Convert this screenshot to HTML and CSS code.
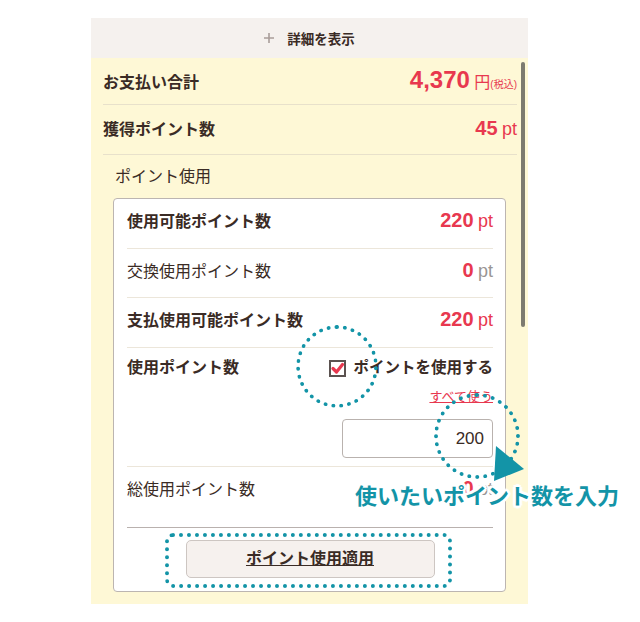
FILE: index.html
```html
<!DOCTYPE html>
<html lang="ja">
<head>
<meta charset="utf-8">
<title>ポイント使用</title>
<link rel="stylesheet" href="styles.css">
</head>
<body>
<div class="page">
  <div class="panel">
    <div class="detail-bar">
      <svg class="plus" width="10" height="10" viewBox="0 0 10 10"><path d="M5 0V10M0 5H10" stroke="#a99d99" stroke-width="1.6"/></svg>
      <span>詳細を表示</span>
    </div>
    <div class="summary">
      <div class="top-row r1">
        <span class="label bold">お支払い合計</span>
        <span class="value"><span class="big">4,370</span> <span class="yen">円</span><span class="tax">(税込)</span></span>
      </div>
      <div class="top-row r2">
        <span class="label bold">獲得ポイント数</span>
        <span class="value"><span class="num">45</span> <span class="pt">pt</span></span>
      </div>
      <div class="section-title">ポイント使用</div>
      <div class="card">
        <div class="crow c1">
          <span class="label bold">使用可能ポイント数</span>
          <span class="value"><span class="num">220</span> <span class="pt">pt</span></span>
        </div>
        <div class="crow c2">
          <span class="label">交換使用ポイント数</span>
          <span class="value"><span class="num">0</span> <span class="pt grey">pt</span></span>
        </div>
        <div class="crow c3">
          <span class="label bold">支払使用可能ポイント数</span>
          <span class="value"><span class="num">220</span> <span class="pt">pt</span></span>
        </div>
        <div class="crow c4">
          <span class="label bold">使用ポイント数</span>
          <div class="use-col">
            <label class="check-line">
              <svg class="checkbox" width="17" height="17" viewBox="0 0 17 17"><rect x="1" y="1" width="15" height="15" fill="#fff" stroke="#5b5250" stroke-width="2"/><path d="M4 8.5L7.5 12L13.5 4.5" fill="none" stroke="#e8384f" stroke-width="3.2" stroke-linecap="round" stroke-linejoin="round"/></svg>
              <span class="bold">ポイントを使用する</span>
            </label>
            <a class="use-all">すべて使う</a>
            <input class="pt-input" type="text" value="200">
          </div>
        </div>
        <div class="crow c5">
          <span class="label">総使用ポイント数</span>
          <span class="value"><span class="num">0</span> <span class="pt grey">pt</span></span>
        </div>
        <div class="btn-area">
          <div class="apply-btn">ポイント使用適用</div>
        </div>
      </div>
    </div>
    <div class="scrollbar"></div>
  </div>

  <div class="ann circ1"></div>
  <div class="ann circ2"></div>
  <div class="ann rect"></div>
  <svg class="arrow" width="40" height="40" viewBox="0 0 40 40"><polygon points="6,2 34,25 4,37" fill="#1394a7"/></svg>
  <div class="ann-text">使いたいポイント数を入力</div>
</div>
</body>
</html>
```

FILE: styles.css
```css
body {
  margin: 0;
  background: #fff;
  font-family: "Liberation Sans", "Noto Sans CJK JP", sans-serif;
  color: #3a2b25;
}

.page {
  position: relative;
  width: 640px;
  height: 622px;
}

.panel {
  position: relative;
  margin-left: 91px;
  padding-top: 18px;
  width: 437px;
}

.bold { font-weight: bold; }

.detail-bar {
  height: 40px;
  background: #f5f1ee;
  display: flex;
  align-items: center;
  justify-content: center;
  gap: 13px;
  font-size: 13.5px;
  font-weight: bold;
}

.summary {
  background: #fef8d6;
  padding: 0 11px 12px 12px;
}

.top-row,
.crow {
  display: flex;
  justify-content: space-between;
  align-items: baseline;
  line-height: 22px;
  font-size: 16px;
}

.top-row { border-bottom: 1px solid #e8e1cb; }

.r1 { padding-top: 11px; height: 35px; }
.r2 { padding-top: 12px; height: 37px; }

.value { color: #e8384f; white-space: nowrap; }
.big { font-size: 24px; font-weight: bold; }
.yen { font-size: 16px; }
.tax { font-size: 10px; }
.num { font-size: 20px; font-weight: bold; }
.pt { font-size: 18px; }
.pt.grey { color: #9a9593; }

.section-title {
  padding: 11px 0 10px 12px;
  line-height: 22px;
  font-size: 16px;
}

.card {
  margin: 0 11px 0 10px;
  background: #fff;
  border: 1px solid #bcb5b1;
  border-radius: 4px;
  padding: 0 12px 0 13px;
}

.crow { border-bottom: 1px solid #ece6da; }

.c1 { padding-top: 10px; height: 39px; }
.c2 { padding-top: 10px; height: 38px; }
.c3 { padding-top: 10px; height: 39px; }
.c4 {
  padding: 9px 0 8px;
  align-items: flex-start;
}
.c5 {
  padding-top: 10px;
  height: 50px;
  border-bottom-color: #b9b1ae;
}

.use-col {
  display: flex;
  flex-direction: column;
  align-items: flex-end;
}

.check-line {
  display: flex;
  align-items: center;
  gap: 7px;
  height: 22px;
  font-size: 15.5px;
}

.use-all {
  margin-top: 8px;
  line-height: 20px;
  font-size: 13px;
  color: #e8384f;
  text-decoration: underline;
}

.pt-input {
  margin-top: 12px;
  width: 151px;
  height: 39px;
  box-sizing: border-box;
  border: 1px solid #b9b2ae;
  border-radius: 4px;
  padding: 0 8px 0 0;
  text-align: right;
  font-family: "Liberation Sans", sans-serif;
  font-size: 17px;
  color: #3a2b25;
  background: #fff;
}

.btn-area { padding: 12px 0 13px; }

.apply-btn {
  width: 249px;
  height: 38px;
  margin: 0 auto;
  box-sizing: border-box;
  background: #f6f1ee;
  border: 1px solid #cdc6c2;
  border-radius: 5px;
  text-align: center;
  line-height: 36px;
  font-size: 16px;
  font-weight: bold;
  text-decoration: underline;
}

.scrollbar {
  position: absolute;
  left: 430px;
  top: 62px;
  width: 4px;
  height: 265px;
  background: #7d7b70;
  border-radius: 2px;
}

.ann {
  position: absolute;
  box-sizing: border-box;
  border: 4px dotted #1394a7;
}

.circ1 {
  left: 296px;
  top: 325px;
  width: 82px;
  height: 83px;
  border-radius: 50%;
}

.circ2 {
  left: 434px;
  top: 393px;
  width: 86px;
  height: 86px;
  border-radius: 50%;
}

.rect {
  left: 165px;
  top: 533px;
  width: 287px;
  height: 55px;
  border-radius: 8px;
}

.arrow {
  position: absolute;
  left: 490px;
  top: 444px;
}

.ann-text {
  position: absolute;
  left: 355px;
  top: 486px;
  font-size: 22px;
  line-height: 22px;
  font-weight: bold;
  color: #1394a7;
  white-space: nowrap;
  text-shadow:
    2px 0 0 #fff, -2px 0 0 #fff, 0 2px 0 #fff, 0 -2px 0 #fff,
    2px 2px 0 #fff, -2px -2px 0 #fff, 2px -2px 0 #fff, -2px 2px 0 #fff,
    3px 0 1px #fff, -3px 0 1px #fff, 0 3px 1px #fff, 0 -3px 1px #fff;
}
```
